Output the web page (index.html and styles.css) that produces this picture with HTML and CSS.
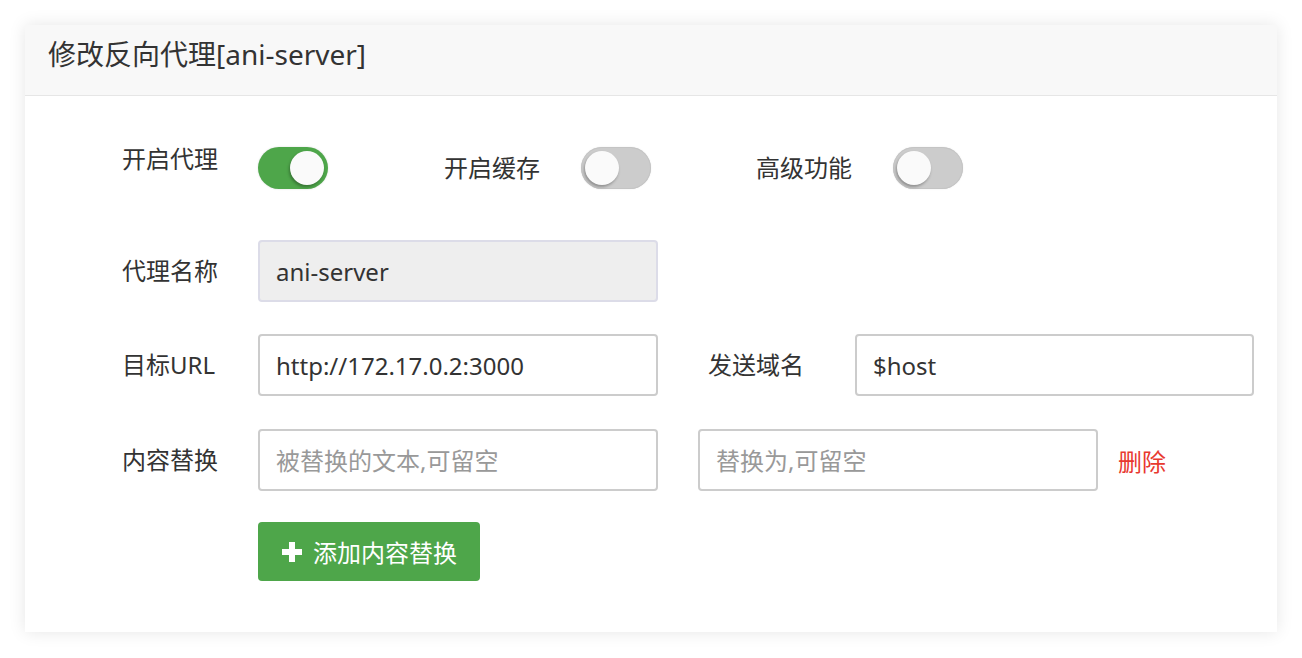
FILE: index.html
```html
<!DOCTYPE html>
<html lang="zh-CN">

<head>
    <meta charset="UTF-8">
    <meta name="viewport" content="width=device-width, initial-scale=1.0">
    <title>修改反向代理</title>
    <link rel="stylesheet" href="styles.css">
</head>

<body>
    <div class="panel">
        <div class="panel-header">修改反向代理[ani-server]</div>
        <div class="panel-body">
            <div class="form-row row-switches">
                <span class="form-label label-top">开启代理</span>
                <span class="switch on"><span class="knob"></span></span>
                <span class="inline-label gap-wide">开启缓存</span>
                <span class="switch"><span class="knob"></span></span>
                <span class="inline-label gap-mid">高级功能</span>
                <span class="switch"><span class="knob"></span></span>
            </div>

            <div class="form-row row-name">
                <span class="form-label">代理名称</span>
                <input class="field readonly" type="text" value="ani-server" readonly>
            </div>

            <div class="form-row row-url">
                <span class="form-label">目标URL</span>
                <input class="field" type="text" value="http://172.17.0.2:3000">
                <span class="inline-label host-label">发送域名</span>
                <input class="field host-field" type="text" value="$host">
            </div>

            <div class="form-row row-replace">
                <span class="form-label">内容替换</span>
                <input class="field" type="text" placeholder="被替换的文本,可留空">
                <input class="field to-field" type="text" placeholder="替换为,可留空">
                <a class="delete-link" href="#">删除</a>
            </div>

            <div class="form-row row-add">
                <button class="add-btn">
                    <svg width="20" height="20" viewBox="0 0 20 20"><path d="M7 0h6v7h7v6h-7v7H7v-7H0V7h7z" fill="#fff"/></svg>
                    添加内容替换
                </button>
            </div>
        </div>
    </div>
</body>

</html>
```

FILE: styles.css
```css
body {
    margin: 0;
    background-color: #ffffff;
    font-family: "Noto Sans", "Noto Sans CJK SC", sans-serif;
    color: #333;
}

.panel {
    margin: 25px;
    background-color: #ffffff;
    box-shadow: 0 0 16px rgba(0, 0, 0, 0.1);
}

.panel-header {
    height: 71px;
    box-sizing: border-box;
    padding: 0 23px;
    line-height: 58px;
    font-size: 28px;
    color: #333;
    background-color: #f8f8f8;
    border-bottom: 1px solid #e6e6e6;
}

.panel-body {
    padding: 51px 24px 51px 97px;
}

.form-row {
    display: flex;
    align-items: center;
}

.row-switches {
    height: 42px;
}

.row-name {
    margin-top: 51px;
}

.row-url {
    margin-top: 32px;
}

.row-replace {
    margin-top: 33px;
}

.row-add {
    margin-top: 31px;
}

.form-label {
    flex: none;
    width: 136px;
    font-size: 24px;
    line-height: 24px;
}

.label-top {
    align-self: flex-start;
}

.inline-label {
    flex: none;
    font-size: 24px;
    line-height: 24px;
}

.gap-wide {
    margin-left: 116px;
    margin-right: 41px;
}

.gap-mid {
    margin-left: 105px;
    margin-right: 41px;
}

.switch {
    position: relative;
    flex: none;
    width: 70px;
    height: 42px;
    border-radius: 21px;
    background-color: #cccccc;
    box-shadow: inset 0 0 0 1px #c4c4c4, 0 0 2px rgba(0, 0, 0, 0.08);
}

.switch .knob {
    position: absolute;
    top: 4px;
    left: 4px;
    width: 34px;
    height: 34px;
    border-radius: 50%;
    background-color: #fafafa;
    box-shadow: -1px 2px 3px rgba(0, 0, 0, 0.3);
}

.switch.on {
    background-color: #4ea64a;
    box-shadow: 0 0 2px rgba(0, 0, 0, 0.15);
}

.switch.on .knob {
    left: 32px;
}

.field {
    flex: none;
    width: 400px;
    height: 62px;
    box-sizing: border-box;
    padding: 0 16px;
    font-family: "Noto Sans", "Noto Sans CJK SC", sans-serif;
    font-size: 24px;
    color: #333;
    background-color: #ffffff;
    border: 2px solid #cccccc;
    border-radius: 4px;
    outline: none;
}

.field::placeholder {
    color: #999;
}

.field.readonly {
    background-color: #eeeeee;
    border-color: #dcdce8;
}

.host-label {
    margin-left: 50px;
    margin-right: 51px;
}

.host-field {
    width: 399px;
}

.to-field {
    margin-left: 40px;
}

.delete-link {
    margin-left: 20px;
    font-size: 24px;
    color: #e8392f;
    text-decoration: none;
}

.add-btn {
    display: flex;
    align-items: center;
    gap: 11px;
    margin-left: 136px;
    height: 59px;
    padding: 0 23px 0 24px;
    border: none;
    border-radius: 4px;
    background-color: #4ea64a;
    color: #ffffff;
    font-family: "Noto Sans", "Noto Sans CJK SC", sans-serif;
    font-size: 24px;
    cursor: pointer;
}
```
